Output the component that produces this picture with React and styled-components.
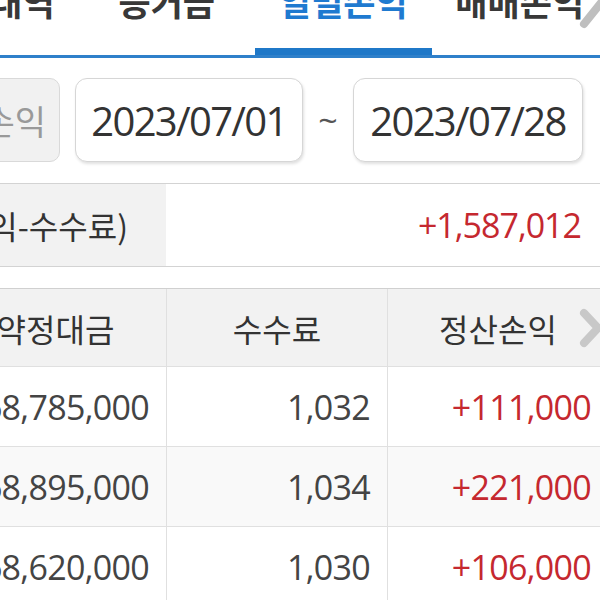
import React from "react";
import styled, { createGlobalStyle } from "styled-components";

const GlobalStyle = createGlobalStyle`
  body {
    margin: 0;
    background: #fff;
    font-family: "Open Sans", "Noto Sans CJK KR", sans-serif;
    overflow: hidden;
  }
`;

const KR = `"Noto Sans CJK KR", "Noto Sans", sans-serif`;
const NUM = `"Open Sans", "Noto Sans CJK KR", sans-serif`;

const Screen = styled.div`
  position: relative;
  width: 600px;
  height: 600px;
  overflow: hidden;
  background: #fff;
`;

const TabBar = styled.div`
  display: grid;
  grid-template-columns: repeat(4, 176.5px);
  margin-left: -98px;
  height: 58px;
  box-sizing: border-box;
  border-bottom: 3px solid #2f80ca;
`;

const Tab = styled.div`
  height: 55px;
  box-sizing: border-box;
  display: flex;
  align-items: flex-end;
  justify-content: center;
  padding-bottom: 37px;
  font-family: ${KR};
  font-size: 35px;
  line-height: 35px;
  font-weight: 700;
  color: ${(p) => (p.$active ? "#1f7ad0" : "#383838")};
  box-shadow: ${(p) => (p.$active ? "inset 0 -7px 0 #1f78c8" : "none")};
  white-space: nowrap;
`;

const ScrollHint = styled.svg`
  position: absolute;
  left: 574px;
  top: -8px;
`;

const DateRow = styled.div`
  display: flex;
  align-items: center;
  margin-top: 20px;
  height: 84px;
`;

const FilterButton = styled.div`
  margin-left: -90px;
  margin-right: 15px;
  width: 150px;
  height: 84px;
  box-sizing: border-box;
  border: 1.5px solid #d9d9d9;
  border-radius: 10px;
  background: #f1f1f1;
  color: #999;
  font-family: ${KR};
  font-size: 34px;
  display: flex;
  align-items: center;
  justify-content: flex-end;
  padding-right: 13px;
  white-space: nowrap;
  overflow: hidden;
`;

const DateBox = styled.div`
  width: ${(p) => p.$w}px;
  height: 84px;
  box-sizing: border-box;
  border: 1.5px solid #d6d6d6;
  border-radius: 12px;
  background: #fff;
  box-shadow: 1px 2px 3px rgba(0, 0, 0, 0.12);
  display: flex;
  align-items: center;
  justify-content: center;
  font-family: ${NUM};
  font-size: 40px;
  font-weight: 500;
  letter-spacing: -1.7px;
  color: #333;
`;

const Tilde = styled.div`
  width: 50px;
  text-align: center;
  font-family: ${NUM};
  font-size: 34px;
  color: #555;
`;

const Summary = styled.div`
  display: grid;
  grid-template-columns: 166px 1fr;
  margin-top: 21px;
  height: 84px;
  box-sizing: border-box;
  border-top: 1px solid #d3d3d3;
  border-bottom: 1px solid #d3d3d3;
`;

const SummaryLabel = styled.div`
  background: #f2f2f2;
  display: flex;
  align-items: center;
  justify-content: flex-end;
  padding-right: 38px;
  font-family: ${KR};
  font-size: 32px;
  color: #333;
  white-space: nowrap;
  overflow: hidden;
`;

const SummaryValue = styled.div`
  display: flex;
  align-items: center;
  justify-content: flex-end;
  padding-right: 19px;
  font-family: ${NUM};
  font-size: 34px;
  letter-spacing: -1px;
  color: #c5282f;
`;

const Table = styled.div`
  margin-left: -55px;
  width: 663px;
  margin-top: 21px;
`;

const Row = styled.div`
  display: grid;
  grid-template-columns: repeat(3, 221px);
  height: ${(p) => p.$h}px;
  box-sizing: border-box;
  background: ${(p) => p.$bg || "#fff"};
  border-top: ${(p) => (p.$head ? "1px solid #d0d0d0" : "none")};
  border-bottom: 1px solid #e0e0e0;
`;

const HeadCell = styled.div`
  position: relative;
  display: flex;
  align-items: center;
  justify-content: center;
  font-family: ${KR};
  font-size: 32px;
  color: #333;
  border-left: ${(p) => (p.$first ? "none" : "1px solid #e0e0e0")};
`;

const Cell = styled.div`
  display: flex;
  align-items: center;
  justify-content: flex-end;
  padding-right: 17px;
  font-family: ${NUM};
  font-size: 34px;
  letter-spacing: -0.7px;
  color: ${(p) => p.$color || "#444"};
  border-left: ${(p) => (p.$first ? "none" : "1px solid #e0e0e0")};
`;

const MoreArrow = styled.svg`
  position: absolute;
  right: 4px;
  top: 50%;
  transform: translateY(-50%);
`;

const rows = [
  { amount: "68,785,000", fee: "1,032", pnl: "+111,000" },
  { amount: "68,895,000", fee: "1,034", pnl: "+221,000" },
  { amount: "68,620,000", fee: "1,030", pnl: "+106,000" },
];

export default function App() {
  return (
    <Screen>
      <GlobalStyle />
      <TabBar>
        <Tab>거래내역</Tab>
        <Tab>증거금</Tab>
        <Tab $active>일별손익</Tab>
        <Tab>매매손익</Tab>
      </TabBar>
      <ScrollHint width="34" height="44" viewBox="0 0 34 44">
        <line x1="10" y1="32" x2="34" y2="2" stroke="#bfbfbf" strokeWidth="8" strokeLinecap="round" />
      </ScrollHint>

      <DateRow>
        <FilterButton>매매손익</FilterButton>
        <DateBox $w={228}>2023/07/01</DateBox>
        <Tilde>~</Tilde>
        <DateBox $w={230}>2023/07/28</DateBox>
      </DateRow>

      <Summary>
        <SummaryLabel>(매매손익-수수료)</SummaryLabel>
        <SummaryValue>+1,587,012</SummaryValue>
      </Summary>

      <Table>
        <Row $head $h={79} $bg="#f2f2f2">
          <HeadCell $first>약정대금</HeadCell>
          <HeadCell>수수료</HeadCell>
          <HeadCell>
            정산손익
            <MoreArrow width="26" height="40" viewBox="0 0 26 40">
              <polyline points="6,5 20,20 6,35" fill="none" stroke="#c8c8c8" strokeWidth="8" strokeLinecap="round" strokeLinejoin="round" />
            </MoreArrow>
          </HeadCell>
        </Row>
        {rows.map((r, i) => (
          <Row key={i} $h={80} $bg={i === 1 ? "#f9f9f9" : "#fff"}>
            <Cell $first>{r.amount}</Cell>
            <Cell>{r.fee}</Cell>
            <Cell $color="#c5282f">{r.pnl}</Cell>
          </Row>
        ))}
      </Table>
    </Screen>
  );
}
